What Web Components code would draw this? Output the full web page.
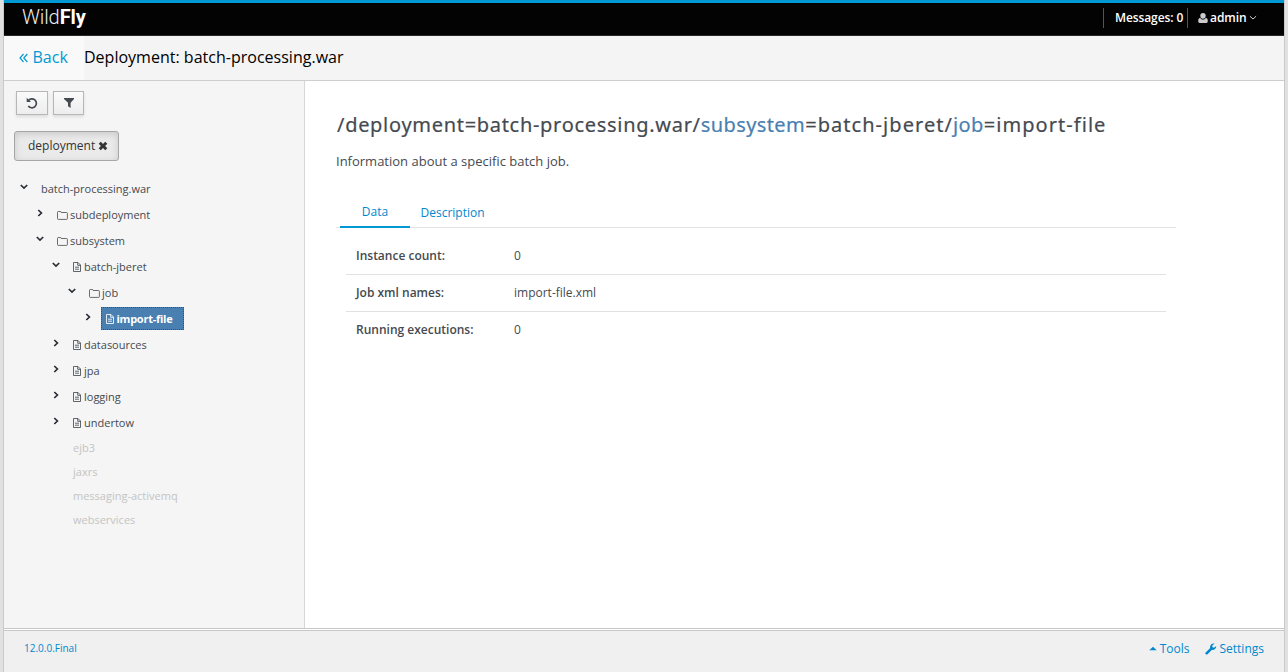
<!DOCTYPE html>
<html lang="en"><head><meta charset="utf-8"><title>WildFly Management</title>
<style>
html,body{margin:0;height:100%;overflow:hidden}
body{font:12px "Open Sans","Noto Sans",sans-serif;color:#454a50;background:#e1e1e1}
</style></head><body>
<console-app>
 <top-bar slot="top" messages="0" user="admin"></top-bar>
 <page-header slot="header">Deployment: batch-processing.war</page-header>
 <resource-sidebar slot="side">
  <tree-node open>batch-processing.war</tree-node>
  <tree-node level="1" icon="folder">subdeployment</tree-node>
  <tree-node level="1" icon="folder" open>subsystem</tree-node>
  <tree-node level="2" icon="file" open>batch-jberet</tree-node>
  <tree-node level="3" icon="folder" open>job</tree-node>
  <tree-node level="4" icon="file" selected>import-file</tree-node>
  <tree-node level="2" icon="file">datasources</tree-node>
  <tree-node level="2" icon="file">jpa</tree-node>
  <tree-node level="2" icon="file">logging</tree-node>
  <tree-node level="2" icon="file">undertow</tree-node>
  <tree-node level="2" disabled>ejb3</tree-node>
  <tree-node level="2" disabled>jaxrs</tree-node>
  <tree-node level="2" disabled>messaging-activemq</tree-node>
  <tree-node level="2" disabled>webservices</tree-node>
 </resource-sidebar>
 <resource-view slot="main">
  <data-row label="Instance count:">0</data-row>
  <data-row label="Job xml names:">import-file.xml</data-row>
  <data-row label="Running executions:">0</data-row>
 </resource-view>
 <app-footer slot="footer">12.0.0.Final</app-footer>
</console-app>
<script>
const define=(name,render)=>customElements.define(name,class extends HTMLElement{
  connectedCallback(){ if(!this.shadowRoot) this.attachShadow({mode:'open'}).innerHTML=render(this); }
});
const ICONS={
 refresh:['0 0 12 12','<path d="M2.2 3.7A4.5 4.5 0 1 1 2.3 9" fill="none" stroke="currentColor" stroke-width="1.7"/><path d="M.7.8V5.1H5z"/>'],
 filter:['0 0 10 12','<path d="M0 1h10v1L6.6 5.8V11L4 9.2V5.8L0 2z"/>'],
 close:['0 0 10 10','<path d="M.7 2.8 2.8.7 5 2.9 7.2.7 9.3 2.8 7.1 5 9.3 7.2 7.2 9.3 5 7.1 2.8 9.3.7 7.2 2.9 5z"/>'],
 down:['0 0 8 6','<path d="M.8 1 4 4.1 7.2 1" fill="none" stroke="currentColor" stroke-width="1.7"/>'],
 right:['0 0 6 8','<path d="M1.3 1 4.4 4 1.3 7" fill="none" stroke="currentColor" stroke-width="1.7"/>'],
 thin:['0 0 8 6','<path d="M.9 1.2 4 4 7.1 1.2" fill="none" stroke="currentColor"/>'],
 folder:['0 0 11 9','<path d="M.5 1.3Q.5.5 1.3.5H3.4Q4.1.5 4.1 1.2V1.5H9.5Q10.4 1.5 10.4 2.3V7.6Q10.4 8.4 9.6 8.4H1.3Q.5 8.4.5 7.6z" fill="none" stroke="currentColor" stroke-width=".8"/>'],
 file:['0 0 8 10','<path d="M.5.5H5L7.5 3V9.5H.5zM4.7.5V3.3H7.5M2 5.2H6M2 7.2H6" fill="none" stroke="currentColor" stroke-width=".85"/>'],
 user:['0 0 10 10','<path d="M5 0A2.7 2.7 0 0 1 7.7 2.8C7.7 4.5 6.5 5.8 5 5.8S2.3 4.5 2.3 2.8A2.7 2.7 0 0 1 5 0M2.2 4.7C2.8 5.9 3.8 6.6 5 6.6S7.2 5.9 7.8 4.7C9.4 5 9.8 6.5 9.8 8.3Q9.8 10 8.3 10H1.7Q.2 10 .2 8.3C.2 6.5.6 5 2.2 4.7"/>'],
 back:['0 0 9 10','<path d="M4.5 1 1 5 4.5 9M8.3 1 4.8 5 8.3 9" fill="none" stroke="currentColor" stroke-width="1.15"/>'],
 up:['0 0 8 5','<path d="M.3 4.3 4 .8 7.7 4.3z"/>'],
 wrench:['0 0 12 12','<path d="M.7 9.5 5.2 5A3.5 3.5 0 0 1 9.6.7L7.4 2.2V3.9L8.8 4.7 11.2 3.2A3.5 3.5 0 0 1 7 6.8L2.5 11.3Q1.6 12 .7 11.1T.7 9.5"/>']
};
define('ui-icon',e=>{const [v,p]=ICONS[e.getAttribute('name')],[,,w,h]=v.split(' ');
 return `<style>:host{display:block;flex:none;width:${w}px;height:${h}px}svg{display:block}</style><svg width="${w}" height="${h}" viewBox="${v}" fill="currentColor">${p}</svg>`});
define('console-app',()=>`<style>
 :host{display:grid;box-sizing:border-box;height:672px;margin:0 3px;border:solid #c9c9c9;border-width:0 1px;grid-template:36px 45px 547px 1fr/301px 1fr;background:#fff}
 slot{display:block;min-width:0}
 [name=top],[name=header],[name=footer]{grid-column:1/-1}
</style><slot name="top"></slot><slot name="header"></slot><slot name="side"></slot><slot name="main"></slot><slot name="footer"></slot>`);
define('top-bar',e=>`<style>
 :host{display:flex;box-sizing:border-box;height:36px;border-top:3px solid #0099d3;border-bottom:1px solid #292929;background:#030303;color:#fff;font-weight:600;padding:0 27px 0 18px}
 .logo{font:300 20px/29px Roboto,sans-serif;letter-spacing:-.1px;flex:1;color:#eee} b{font-weight:700;color:#fff}
 .msg,.user{box-sizing:border-box;height:20px;margin-top:5px;border-left:1px solid #555;line-height:19px}
 .msg{width:84px;padding-left:11px;white-space:nowrap;letter-spacing:-.1px}.user{width:70px;padding-left:10px;display:flex;align-items:center}
 .user span{margin:-2px 2px 0 2px;letter-spacing:-.05px}ui-icon{color:#ccc}.user ui-icon:first-child{margin-top:-1px}
</style><div class="logo">Wild<b>Fly</b></div><div class="msg">Messages: ${e.getAttribute('messages')}</div><div class="user"><ui-icon name="user"></ui-icon><span>${e.getAttribute('user')}</span><ui-icon name="thin"></ui-icon></div>`);
define('page-header',()=>`<style>
 :host{display:flex;box-sizing:border-box;height:45px;border-bottom:1px solid #cecece;background:#f4f4f4;color:#000;font-size:16px;line-height:42px}
 .back{display:flex;align-items:center;box-sizing:border-box;width:80px;padding:0 0 0 15px;gap:4.5px;background:#f9f9f9;color:#0099d3}
 .back span{margin-top:-2px}.title{letter-spacing:.01px}
</style><div class="back"><ui-icon name="back"></ui-icon><span>Back</span></div><div class="title"><slot></slot></div>`);
define('resource-sidebar',()=>`<style>
 :host{display:block;box-sizing:border-box;height:547px;border-right:1px solid #d6d6d6;background:#f5f5f5;padding:10px 0 0 10px}
 .tools{display:flex;gap:5px;padding-left:2px}
 .btn{display:flex;align-items:center;justify-content:center;box-sizing:border-box;width:32px;height:24px;border:1px solid #b7b7b7;background:linear-gradient(#fafafa,#ededed);box-shadow:0 2px 3px rgba(3,3,3,.1)}
 .btn+.btn{width:31px}.btn ui-icon{margin-top:-1px}
 .chip{display:flex;align-items:center;box-sizing:border-box;width:105px;height:30px;margin:16px 0 15px;padding:0 0 1px 13px;border:1px solid #a6a6a6;border-radius:3px;background:#eaeaea;box-shadow:inset 0 2px 7px rgba(3,3,3,.14);color:#333;gap:2.5px}
 .chip ui-icon{margin-top:1px}
</style><div class="tools"><div class="btn"><ui-icon name="refresh"></ui-icon></div><div class="btn"><ui-icon name="filter"></ui-icon></div></div>
<div class="chip"><span>deployment</span><ui-icon name="close"></ui-icon></div><slot></slot>`);
define('tree-node',e=>{const off=e.hasAttribute('disabled'),open=e.hasAttribute('open'),sel=e.hasAttribute('selected'),ic=e.getAttribute('icon');
 return `<style>
 :host{display:flex;align-items:center;box-sizing:border-box;height:${off?24:26}px;padding-left:${6+16*(+e.getAttribute('level')||0)}px;font-size:11px;line-height:22px;color:${off?'#c4c4c4':'#454a50'}}
 .arrow{width:17px;flex:none;color:#292e34;padding-bottom:5px;box-sizing:border-box}
 .arrow ui-icon{margin-left:${open?.4:1.4}px}
 .label{display:flex;align-items:center;gap:${ic==='folder'?2.4:3.4}px;padding-left:4px;white-space:nowrap}
 .icon{margin-left:-.4px}
 .label.sel{box-sizing:border-box;width:83px;height:23px;padding:0 0 0 4px;margin:-1px 0 0;border:1px dotted #0a5f9e;background:#4a7fb1;color:#fff;font-weight:700;letter-spacing:-.25px;gap:2.5px}
 .label ui-icon{margin-top:${ic==='file'&&!sel?0:1}px}
</style><div class="arrow">${off?'':`<ui-icon name="${open?'down':'right'}"></ui-icon>`}</div><div class="label${ic?' icon':''}${sel?' sel':''}">${ic?`<ui-icon name="${ic}"></ui-icon>`:''}<span><slot></slot></span></div>`});
define('resource-view',()=>`<style>
 :host{display:block;padding:29px 108px 0 31px}
 h1{margin:0;font:400 20px/30px "Noto Sans","Open Sans",sans-serif;letter-spacing:.7px;white-space:nowrap;padding-left:1px;-webkit-text-stroke:.2px currentColor}
 h1 span{color:#4a7fb1;letter-spacing:.4px}h1 i{font-style:normal;letter-spacing:1.05px}
 p{margin:12px 0 0;font-size:13px;line-height:18px}
 .tabs{display:flex;box-sizing:border-box;height:30px;margin-top:28px;padding-left:4px;border-bottom:1px solid #e4e4e4;color:#0088ce;line-height:30px}
 .tabs div:first-child{width:70px;height:28px;line-height:28px;text-align:center;border-bottom:2px solid #0099d3;margin-right:10.5px}
 .rows{margin:10px 10px 0}
</style><h1>/deployment=batch-processing.war/<span>subsystem</span><i>=batch-jberet/</i><span>job</span><i>=import-file</i></h1>
<p>Information about a specific batch job.</p>
<div class="tabs"><div>Data</div><div>Description</div></div><div class="rows"><slot></slot></div>`);
define('data-row',e=>`<style>
 :host{display:grid;grid-template-columns:158px 1fr;box-sizing:border-box;height:37px;line-height:36px;padding-left:10px;border-bottom:1px solid #e1e1e1}
 :host(:last-of-type){border-bottom:0}
 b{font-weight:600}
</style><b>${e.getAttribute('label')}</b><span><slot></slot></span>`);
define('app-footer',()=>`<style>
 :host{display:flex;align-items:center;box-sizing:border-box;height:44px;border-top:1px solid #c8c8c8;background:linear-gradient(#fff 0 1px,#c8c8c8 1px 2px,#f0f0f0 2px);color:#0088ce;padding:0 20px 5px}
 .version{font-size:10px;flex:1}.link{display:flex;align-items:center;gap:3px}.link+.link{margin-left:15px}.link ui-icon{margin-top:1px}
</style><span class="version"><slot></slot></span><div class="link"><ui-icon name="up"></ui-icon><span>Tools</span></div><div class="link"><ui-icon name="wrench"></ui-icon><span>Settings</span></div>`);
</script></body></html>
